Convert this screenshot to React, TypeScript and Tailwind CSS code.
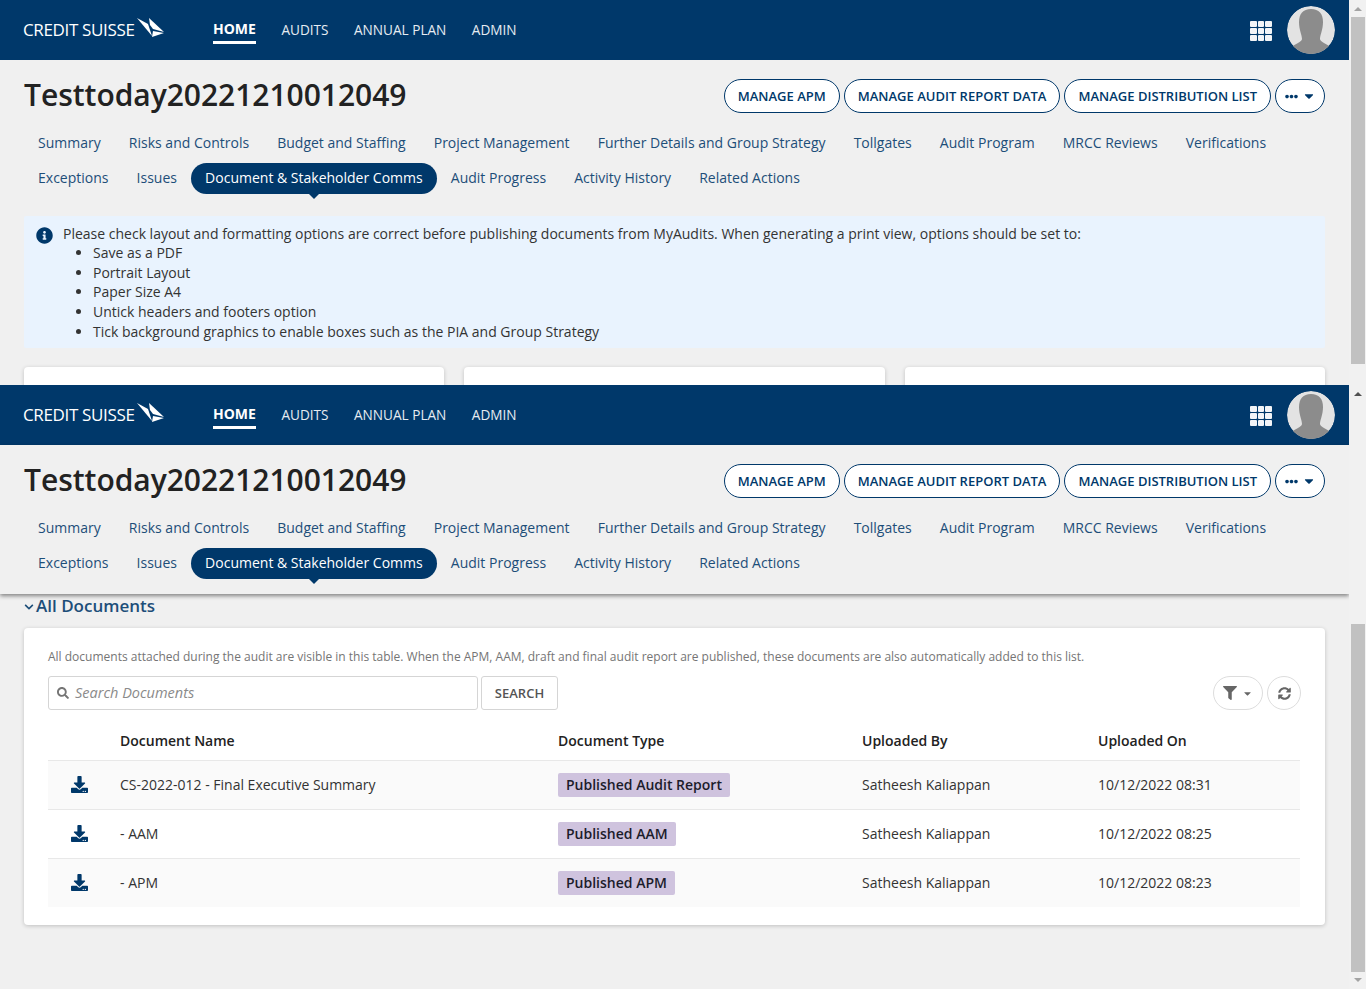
import { FaCaretDown, FaChevronDown, FaDownload, FaEllipsisH, FaFilter, FaInfoCircle, FaSearch, FaSyncAlt } from 'react-icons/fa';

const tabRows = [
  ['Summary', 'Risks and Controls', 'Budget and Staffing', 'Project Management', 'Further Details and Group Strategy', 'Tollgates', 'Audit Program', 'MRCC Reviews', 'Verifications'],
  ['Exceptions', 'Issues', 'Document & Stakeholder Comms', 'Audit Progress', 'Activity History', 'Related Actions'],
];

const docs = [
  { name: 'CS-2022-012 - Final Executive Summary', type: 'Published Audit Report', on: '10/12/2022 08:31' },
  { name: '- AAM', type: 'Published AAM', on: '10/12/2022 08:25' },
  { name: '- APM', type: 'Published APM', on: '10/12/2022 08:23' },
];

function Logo() {
  return (
    <div className="flex items-center w-[190px]">
      <span className="text-[17px] tracking-[-0.35px] text-white font-['Open_Sans',sans-serif]">CREDIT SUISSE</span>
      <svg width="28" height="21" viewBox="0 0 28 21" className="ml-[2px] mb-[5px]">
        <path d="M0 1 L11 7 L15 19 Z" fill="#fff" />
        <path d="M12 1 L27 15 L16 12 L13 8 Z" fill="#fff" />
        <path d="M16 14 L27 16 L15 20 Z" fill="#fff" />
      </svg>
    </div>
  );
}

function Avatar() {
  return (
    <svg width="48" height="48" viewBox="0 0 48 48" className="rounded-full">
      <circle cx="24" cy="24" r="24" fill="#e3e3e3" />
      <path d="M24 3 C32 3 36 8 36 16 C36 24 33 29 33 33 C33 36 40 38 44 41 C38 46 31 48 24 48 C17 48 10 46 4 41 C8 38 15 36 15 33 C15 29 12 24 12 16 C12 8 16 3 24 3 Z" fill="#8c8c8c" />
    </svg>
  );
}

function AppsIcon() {
  const cells = [0, 1, 2, 3, 4, 5, 6, 7, 8];
  return (
    <div className="grid grid-cols-[6.67px_6.67px_6.67px] grid-rows-[6px_6px_6px] gap-[1px] mt-[2px]">
      {cells.map((c) => (
        <span key={c} className="bg-[#f2f4f7] rounded-[1px]" />
      ))}
    </div>
  );
}

function Header() {
  return (
    <header className="flex items-center h-[60px] shrink-0 bg-[#00386a] pl-[23px] pr-[14px]">
      <Logo />
      <nav className="flex items-center gap-[25.5px] text-[13.6px] text-[#e6ecf2]">
        <span className="flex flex-col font-bold text-sm text-white mt-[-2px] pt-[5px] border-b-[3px] border-white pb-[2px]">HOME</span>
        <span>AUDITS</span>
        <span>ANNUAL PLAN</span>
        <span>ADMIN</span>
      </nav>
      <div className="ml-auto flex items-center gap-[15px]">
        <AppsIcon />
        <Avatar />
      </div>
    </header>
  );
}

function OutlineButton({ label }: { label: string }) {
  return (
    <button className="h-[34px] px-[13px] pt-[1px] rounded-full border border-[#00386a] bg-white text-[13px] font-semibold text-[#00386a] whitespace-nowrap">
      {label}
    </button>
  );
}

function TitleBlock() {
  return (
    <div className="pl-[24px] pr-[24px]">
      <div className="flex items-start justify-between h-[67px] pt-[19px]">
        <h1 className="text-[30px] leading-[40px] -mt-[4px] font-semibold tracking-[-0.03px] text-[#222]">Testtoday20221210012049</h1>
        <div className="flex items-center gap-[4px]">
          <OutlineButton label="MANAGE APM" />
          <OutlineButton label="MANAGE AUDIT REPORT DATA" />
          <OutlineButton label="MANAGE DISTRIBUTION LIST" />
          <button className="flex items-center justify-center gap-[4px] w-[50px] h-[34px] rounded-full border border-[#00386a] bg-white text-[#00386a]">
            <FaEllipsisH className="w-[13px] h-[13px]" />
            <FaCaretDown className="w-[14px] h-[14px]" />
          </button>
        </div>
      </div>
      <div className="flex flex-col gap-[3px]">
        {tabRows.map((row, i) => (
          <div key={i} className="flex h-[32px] items-center">
            {row.map((t) => {
              const active = t.startsWith('Document');
              return (
                <span
                  key={t}
                  className={
                    active
                      ? 'relative flex items-center h-[31px] mt-[1px] pb-[1px] px-[14.1px] rounded-full bg-[#00386a] text-sm text-white whitespace-nowrap'
                      : 'flex items-center h-[32px] px-[14.06px] text-sm text-[#1d4e79] whitespace-nowrap'
                  }
                >
                  {t}
                  {active && <span className="absolute left-1/2 -translate-x-1/2 top-full border-x-[5px] border-t-[5px] border-x-transparent border-t-[#00386a]" />}
                </span>
              );
            })}
          </div>
        ))}
      </div>
    </div>
  );
}

function ScrollBar({ top, thumb, upColor, showDown }: { top: number; thumb: number; upColor: string; showDown: boolean }) {
  return (
    <div className="flex flex-col w-[17px] shrink-0 bg-[#f1f1f1] items-center">
      <div className="flex items-center justify-center h-[17px] w-full shrink-0">
        <span className="border-x-[4px] border-b-[4px] border-x-transparent" style={{ borderBottomColor: upColor }} />
      </div>
      <div className="w-full shrink-0" style={{ height: top }} />
      <div className="w-[14px] ml-[1px] shrink-0 bg-[#c1c1c1]" style={{ height: thumb }} />
      <div className="flex flex-1 items-end justify-center w-full pb-[7px]">
        {showDown && <span className="border-x-[4px] border-t-[4px] border-x-transparent border-t-[#a3a3a3]" />}
      </div>
    </div>
  );
}

function InfoPanel() {
  return (
    <div className="mx-[24px] mt-[22px] h-[132px] flex gap-[10px] bg-[#e9f3fe] rounded-[2px] pl-[12px] pt-[7.6px] text-sm leading-[19.6px] text-[#333]">
      <FaInfoCircle className="w-[17px] h-[17px] mt-[3px] text-[#00386a] shrink-0" />
      <div>
        <p>Please check layout and formatting options are correct before publishing documents from MyAudits. When generating a print view, options should be set to:</p>
        <ul className="list-disc pl-[30px]">
          <li>Save as a PDF</li>
          <li>Portrait Layout</li>
          <li>Paper Size A4</li>
          <li>Untick headers and footers option</li>
          <li>Tick background graphics to enable boxes such as the PIA and Group Strategy</li>
        </ul>
      </div>
    </div>
  );
}

function DocumentsCard() {
  return (
    <div className="mx-[24px] mt-[9px] h-[297px] bg-white rounded-[4px] shadow-[0_1px_4px_rgba(0,0,0,0.2)] pl-[24px] pr-[25px] pt-[21px]">
      <p className="text-xs leading-[16px] text-[#757575]">
        All documents attached during the audit are visible in this table. When the APM, AAM, draft and final audit report are published, these documents are also automatically added to this list.
      </p>
      <div className="flex items-center mt-[11px]">
        <div className="flex items-center gap-[6px] w-[430px] h-[34px] border border-[#d5d5d5] rounded-[3px] pl-[8px] text-[14.5px] italic text-[#8a8a8a]">
          <FaSearch className="w-[12px] h-[12px] text-[#757575]" />
          <span>Search Documents</span>
        </div>
        <button className="ml-[3px] w-[77px] h-[34px] pt-[1px] border border-[#d5d5d5] rounded-[3px] text-[13px] font-semibold text-[#555]">SEARCH</button>
        <div className="ml-auto -mr-[1px] flex items-center gap-[4px]">
          <button className="flex items-center justify-center gap-[5px] w-[50px] h-[34px] border border-[#ddd] rounded-full text-[#666]">
            <FaFilter className="w-[14px] h-[14px]" />
            <FaCaretDown className="w-[11px] h-[11px]" />
          </button>
          <button className="flex items-center justify-center w-[34px] h-[34px] border border-[#ddd] rounded-full text-[#666]">
            <FaSyncAlt className="w-[13px] h-[13px]" />
          </button>
        </div>
      </div>
      <table className="w-full mt-[11px] table-fixed text-sm text-[#333]">
        <thead>
          <tr className="h-[39px] font-semibold text-[#222]">
            <th className="w-[72px]" />
            <th className="w-[438px] pt-[2px] text-left font-semibold">Document Name</th>
            <th className="w-[304px] pt-[2px] text-left font-semibold">Document Type</th>
            <th className="w-[236px] pt-[2px] text-left font-semibold">Uploaded By</th>
            <th className="pt-[2px] text-left font-semibold">Uploaded On</th>
          </tr>
        </thead>
        <tbody>
          {docs.map((d, i) => (
            <tr key={d.type} className={i % 2 === 0 ? 'h-[49px] border-t border-[#e8e8e8] bg-[#fafafa]' : 'h-[49px] border-t border-[#e8e8e8] bg-white'}>
              <td>
                <FaDownload className="w-[17px] h-[17px] ml-[23px] text-[#00386a]" />
              </td>
              <td>{d.name}</td>
              <td>
                <span className="inline-block h-[24px] px-[8px] rounded-[2px] bg-[#cfc3de] font-semibold leading-[24px] text-[#1c1c2b]">{d.type}</span>
              </td>
              <td>Satheesh Kaliappan</td>
              <td>{d.on}</td>
            </tr>
          ))}
        </tbody>
      </table>
    </div>
  );
}

export default function App() {
  return (
    <div className="w-[1366px] h-[989px] overflow-hidden bg-[#f0f0f0] font-['Open_Sans',sans-serif]">
      <section className="flex h-[385px]">
        <div className="w-[1349px] overflow-hidden">
          <Header />
          <TitleBlock />
          <InfoPanel />
          <div className="grid grid-cols-3 gap-[20px] mx-[24px] mt-[19.4px]">
            <div className="h-[40px] bg-white rounded-[4px] shadow-[0_1px_4px_rgba(0,0,0,0.2)]" />
            <div className="h-[40px] bg-white rounded-[4px] shadow-[0_1px_4px_rgba(0,0,0,0.2)]" />
            <div className="h-[40px] bg-white rounded-[4px] shadow-[0_1px_4px_rgba(0,0,0,0.2)]" />
          </div>
        </div>
        <ScrollBar top={0} thumb={347} upColor="#a3a3a3" showDown={false} />
      </section>
      <section className="flex h-[604px]">
        <div className="w-[1349px] overflow-hidden">
          <Header />
          <div className="relative z-10 h-[149px] bg-[#f0f0f0] shadow-[0_2px_4px_rgba(0,0,0,0.45)]">
            <TitleBlock />
          </div>
          <div className="flex items-center h-[25px] pl-[24px] text-[#1d4e79]">
            <FaChevronDown className="w-[10px] h-[10px] mr-[2px]" />
            <h2 className="text-[17px] font-semibold leading-[24px] mt-[-1px]">All Documents</h2>
          </div>
          <DocumentsCard />
        </div>
        <ScrollBar top={222} thumb={348} upColor="#505050" showDown />
      </section>
    </div>
  );
}
